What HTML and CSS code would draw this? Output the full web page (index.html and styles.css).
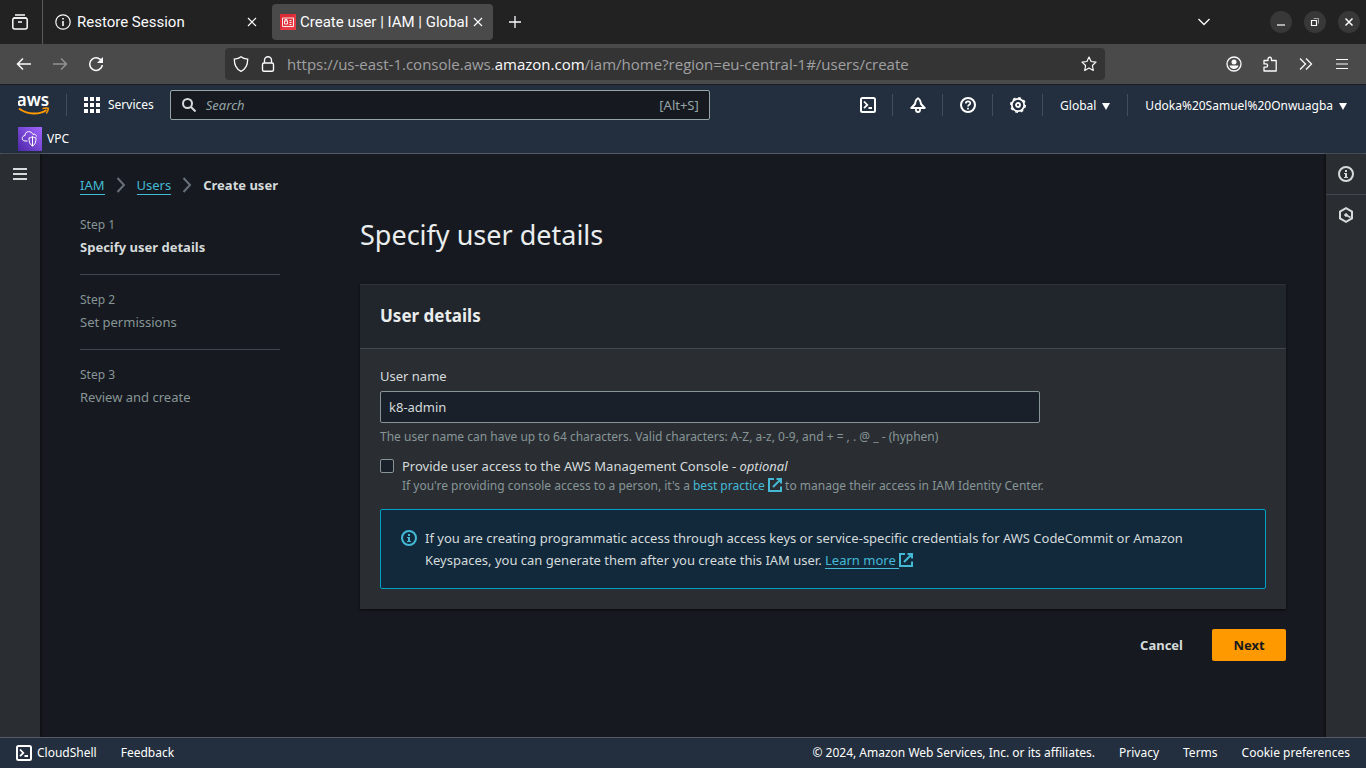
FILE: index.html
```html
<!DOCTYPE html>
<html lang="en">
<head>
<meta charset="utf-8">
<meta name="viewport" content="width=device-width, initial-scale=1">
<title>Create user | IAM | Global</title>
<link rel="stylesheet" href="styles.css">
</head>
<body>
<svg class="defs" aria-hidden="true">
  <symbol id="i-shell" viewBox="0 0 16 16"><rect x="1" y="1" width="14" height="14" rx="1.5" fill="none" stroke="currentColor" stroke-width="2"/><path d="M4 4.5 7.3 8 4 11.2M8.5 11h3.5" fill="none" stroke="currentColor" stroke-width="1.8"/></symbol>
  <symbol id="i-ext" viewBox="0 0 14 14"><path d="M6 1H1v12h12V8.500M8.500 1H13v4.500M13 1 5 9" fill="none" stroke="currentColor" stroke-width="2"/></symbol>
  <symbol id="i-info" viewBox="0 0 16 16"><circle cx="8" cy="8" r="7" fill="none" stroke="currentColor" stroke-width="2"/><path d="M7 4h2v2H7zM6 7h3v4h1v1H6v-1h1V8H6z" fill="currentColor"/></symbol>
  <symbol id="i-close" viewBox="0 0 10 10"><path d="m1 1 8 8M9 1 1 9" fill="none" stroke="currentColor" stroke-width="1.200"/></symbol>
  <symbol id="i-sep" viewBox="0 0 10 16"><path d="m1.500 1 6.500 7-6.500 7" fill="none" stroke="currentColor" stroke-width="2"/></symbol>
</svg>

<header class="browser">
  <div class="tabs">
    <button class="tab-archive" aria-label="Recent browsing">
      <svg width="18" height="18" viewBox="0 0 18 18" fill="none" stroke="currentColor" stroke-width="1.500"><path d="M4 2h10M2.500 5h13"/><rect x="1.800" y="5" width="14.400" height="11" rx="2"/><path d="M7 9h4"/></svg>
    </button>
    <div class="tab">
      <svg width="16" height="16" viewBox="0 0 16 16" fill="none" stroke="currentColor" stroke-width="1.200"><circle cx="8" cy="8" r="7.200"/><path d="M8 7v5M8 4v1.500" stroke-width="1.600"/></svg>
      <span class="tab-title">Restore Session</span>
      <button class="icon-btn" aria-label="Close tab"><svg width="10" height="10"><use href="#i-close"/></svg></button>
    </div>
    <div class="tab tab-active">
      <svg width="16" height="16" viewBox="0 0 16 16"><path d="M0 0h16v16H0z" fill="#dd2c36"/><path d="M0 16 16 0v16z" fill="#f04a52" opacity=".5"/><path d="M2.500 4h11v8.500h-11zM4.500 7h3v3h-3zM5 7V5.500h2V7M9.500 6.500h2M9.500 8.500h2M9.500 10.500h2" fill="none" stroke="#fff" stroke-width=".9"/></svg>
      <span class="tab-title">Create user | IAM | Global</span>
      <button class="icon-btn" aria-label="Close tab"><svg width="10" height="10"><use href="#i-close"/></svg></button>
    </div>
    <button class="icon-btn new-tab" aria-label="New tab"><svg width="12" height="12" viewBox="0 0 12 12"><path d="M6 0v12M0 6h12" stroke="currentColor" stroke-width="1.300"/></svg></button>
    <button class="icon-btn tab-list" aria-label="List all tabs"><svg width="12" height="8" viewBox="0 0 12 8"><path d="m.5 1 5.500 5.500L11.500 1" fill="none" stroke="currentColor" stroke-width="1.300"/></svg></button>
    <div class="window-controls">
      <button aria-label="Minimize"><svg width="10" height="10" viewBox="0 0 10 10"><path d="M1 8h8" stroke="currentColor" stroke-width="1.200"/></svg></button>
      <button aria-label="Restore"><svg width="10" height="10" viewBox="0 0 10 10" fill="none" stroke="currentColor"><path d="M1.500 3.500h5v5h-5z" stroke-width="1.200"/><path d="M3.500 1.500h5v5" opacity=".55"/></svg></button>
      <button aria-label="Close"><svg width="10" height="10" viewBox="0 0 10 10"><path d="m1.500 1.500 7 7M8.500 1.500l-7 7" stroke="currentColor" stroke-width="1.500"/></svg></button>
    </div>
  </div>
  <div class="toolbar">
    <div class="history">
      <button class="icon-btn" aria-label="Back"><svg width="16" height="14" viewBox="0 0 16 14" fill="none" stroke="currentColor" stroke-width="1.500"><path d="M15 7H2M7 1.500 1.500 7 7 12.500"/></svg></button>
      <button class="icon-btn" aria-label="Forward" disabled><svg width="16" height="14" viewBox="0 0 16 14" fill="none" stroke="currentColor" stroke-width="1.500"><path d="M1 7h13M9 1.500 14.500 7 9 12.500"/></svg></button>
      <button class="icon-btn" aria-label="Reload"><svg width="16" height="16" viewBox="0 0 16 16"><path d="M14 6A6.300 6.300 0 1 0 14.300 9" fill="none" stroke="currentColor" stroke-width="1.500"/><path d="M15 1v6H9z" fill="currentColor"/></svg></button>
    </div>
    <div class="address">
      <svg width="16" height="16" viewBox="0 0 16 16" fill="none" stroke="currentColor" stroke-width="1.300"><path d="M8 .8C6 2.500 3.500 3 1.300 3.200 1.300 9 3 13 8 15.300 13 13 14.700 9 14.700 3.200 12.500 3 10 2.500 8 .8z"/></svg>
      <svg width="16" height="16" viewBox="0 0 16 16" fill="none" stroke="currentColor" stroke-width="1.400"><rect x="2.500" y="7" width="11" height="8.300" rx="1.500"/><path d="M4.500 7V4a3.500 3.300 0 0 1 7 0v3"/></svg>
      <a class="url" href="#url">https://us-east-1.console.aws.<span>amazon.com</span>/iam/home?region=eu-central-1#/users/create</a>
      <button class="icon-btn" aria-label="Bookmark this page"><svg width="16" height="16" viewBox="0 0 16 16" fill="none" stroke="currentColor" stroke-width="1.200"><path d="m8 1 2.100 4.500 4.900.6-3.600 3.400.9 5-4.300-2.400-4.300 2.400.9-5L1 6.100l4.900-.6z" stroke-linejoin="round"/></svg></button>
    </div>
    <div class="tools">
      <button class="icon-btn" aria-label="Account"><svg width="16" height="16" viewBox="0 0 16 16"><circle cx="8" cy="8" r="7" fill="none" stroke="currentColor" stroke-width="1.300"/><circle cx="8" cy="6" r="2.500" fill="currentColor"/><path d="M3.500 9.500h9c-.5 2.200-2.200 3.500-4.500 3.500s-4-1.300-4.500-3.500z" fill="currentColor"/></svg></button>
      <button class="icon-btn" aria-label="Extensions"><svg width="16" height="16" viewBox="0 0 16 16" fill="none" stroke="currentColor" stroke-width="1.300" stroke-linejoin="round"><path d="M2 4.500h4V3a1.700 1.700 0 0 1 3.500 0v1.500h4.700V15H2v-3.800h2a1.600 1.600 0 0 0 0-3.300H2z"/></svg></button>
      <button class="icon-btn" aria-label="More tools"><svg width="14" height="14" viewBox="0 0 14 14" fill="none" stroke="currentColor" stroke-width="1.300"><path d="m1 1.500 5.500 5.500L1 12.500M7 1.500 12.500 7 7 12.500"/></svg></button>
      <button class="icon-btn" aria-label="Menu"><svg width="12" height="12" viewBox="0 0 12 12"><path d="M0 1.500h12M0 6h12M0 10.500h12" stroke="currentColor" stroke-width="1.200"/></svg></button>
    </div>
  </div>
</header>

<nav class="aws-nav">
  <div class="nav-row">
    <a class="logo" href="#home" aria-label="AWS home">
      <svg width="32" height="32" viewBox="0 0 32 32"><text class="logo-text" x="15" y="17" text-anchor="middle">aws</text><path d="M1 19.500c8.500 6.500 20.500 6.500 27.500 1.500" fill="none" stroke="#f90" stroke-width="2"/><path d="M24.500 19.600c2.500-.8 4.500-.8 5.700-.3.200 1.700-.6 3.700-2 5.200" fill="none" stroke="#f90" stroke-width="1.500"/></svg>
    </a>
    <button class="services"><svg width="16" height="16" viewBox="0 0 16 16" fill="currentColor"><path d="M0 0h4v4H0zM6 0h4v4H6zM12 0h4v4h-4zM0 6h4v4H0zM6 6h4v4H6zM12 6h4v4h-4zM0 12h4v4H0zM6 12h4v4H6zM12 12h4v4h-4z"/></svg>Services</button>
    <label class="search">
      <svg width="14" height="14" viewBox="0 0 14 14" fill="none" stroke="currentColor" stroke-width="2"><circle cx="5.500" cy="5.500" r="4.500"/><path d="m9 9 4.500 4.500"/></svg>
      <input type="search" placeholder="Search" aria-label="Search">
      <span>[Alt+S]</span>
    </label>
    <div class="nav-tools">
      <button class="nav-icon" aria-label="CloudShell"><svg width="16" height="16"><use href="#i-shell"/></svg></button>
      <button class="nav-icon" aria-label="Notifications"><svg width="16" height="16" viewBox="0 0 16 16" fill="none" stroke="currentColor" stroke-width="2" stroke-linejoin="round"><path d="M8 1.300C6 2.200 5.400 4 5 7L1.300 11h13.400L11 7c-.4-3-1-4.800-3-5.700z"/><path d="M6 12v1a2 2 0 0 0 4 0v-1" stroke-width="1.800"/></svg></button>
      <button class="nav-icon" aria-label="Help"><svg width="16" height="16" viewBox="0 0 16 16" fill="none" stroke="currentColor" stroke-width="2"><circle cx="8" cy="8" r="7"/><path d="M5.800 6.500c0-3 4.500-2.800 4.500-.3C10.300 7.800 8 7.700 8 9.500M8 10.700v1.800" stroke-width="1.700"/></svg></button>
      <button class="nav-icon" aria-label="Settings"><svg width="16" height="16" viewBox="0 0 16 16" fill="none" stroke="currentColor"><circle cx="8" cy="8" r="6.200" stroke-width="1.800"/><circle cx="8" cy="8" r="7.200" stroke-width="1.600" stroke-dasharray="2.827 2.827"/><circle cx="8" cy="8" r="2" stroke-width="1.800"/></svg></button>
      <button class="nav-menu">Global<i class="caret"></i></button>
      <button class="nav-menu">Udoka%20Samuel%20Onwuagba<i class="caret"></i></button>
    </div>
  </div>
  <div class="favorites">
    <a href="#vpc"><svg width="24" height="24" viewBox="0 0 24 24"><defs><linearGradient id="vpc" x1="0" y1="1" x2="1" y2="0"><stop stop-color="#4d27a8"/><stop offset="1" stop-color="#a166ff"/></linearGradient></defs><path d="M0 0h24v24H0z" fill="url(#vpc)"/><g fill="none" stroke="#fff"><path d="M9.500 14H7c-4-.5-3.500-5 0-5.500C7 3.500 13.500 3.500 15 7.500c2-1 3 .3 3.500 2"/><path d="M14.500 9.500c-1 1-2.500 1.300-3.500 1.300 0 4.200.7 6.700 3.500 8.200 2.800-1.500 3.500-4 3.500-8.200-1 0-2.500-.3-3.500-1.300zM14.500 9.500V19"/></g></svg>VPC</a>
  </div>
</nav>

<div class="workspace">
  <aside class="rail rail-left"><button class="rail-btn" aria-label="Open navigation"><svg width="14" height="12" viewBox="0 0 14 12"><path d="M0 1h14M0 6h14M0 11h14" stroke="currentColor" stroke-width="2"/></svg></button></aside>

  <main class="content">
    <ol class="breadcrumbs">
      <li><a href="#iam">IAM</a><svg width="10" height="16"><use href="#i-sep"/></svg></li>
      <li><a href="#users">Users</a><svg width="10" height="16"><use href="#i-sep"/></svg></li>
      <li aria-current="page">Create user</li>
    </ol>
    <div class="wizard">
      <ol class="steps">
        <li class="current"><small>Step 1</small><span>Specify user details</span></li>
        <li><small>Step 2</small><span>Set permissions</span></li>
        <li><small>Step 3</small><span>Review and create</span></li>
      </ol>
      <form class="form">
        <h1>Specify user details</h1>
        <section class="card">
          <h2>User details</h2>
          <div class="card-body">
            <label class="field-label" for="username">User name</label>
            <input class="text-input" id="username" type="text" value="k8-admin">
            <p class="hint">The user name can have up to 64 characters. Valid characters: A-Z, a-z, 0-9, and + = , . @ _ - (hyphen)</p>
            <div class="check">
              <input id="console" type="checkbox">
              <div>
                <label for="console">Provide user access to the AWS Management Console - <em>optional</em></label>
                <p class="hint">If you're providing console access to a person, it's a <a href="#best">best practice <svg width="14" height="14"><use href="#i-ext"/></svg></a> to manage their access in IAM Identity Center.</p>
              </div>
            </div>
            <div class="alert">
              <svg width="16" height="16"><use href="#i-info"/></svg>
              <p>If you are creating programmatic access through access keys or service-specific credentials for AWS CodeCommit or Amazon Keyspaces, you can generate them after you create this IAM user. <a class="learn" href="#learn">Learn more <svg width="14" height="14"><use href="#i-ext"/></svg></a></p>
            </div>
          </div>
        </section>
        <div class="actions">
          <button type="button" class="btn">Cancel</button>
          <button type="button" class="btn btn-primary">Next</button>
        </div>
      </form>
    </div>
  </main>

  <aside class="rail rail-right">
    <button class="rail-btn" aria-label="Info"><svg width="16" height="16"><use href="#i-info"/></svg></button>
    <button class="rail-btn" aria-label="Tutorials"><svg width="16" height="16" viewBox="0 0 16 16" fill="none" stroke="currentColor" stroke-width="2"><path d="m8 1.200 6 3.300v7l-6 3.300-6-3.300v-7z"/><circle cx="8" cy="8" r="1.300" fill="currentColor" stroke-width="1"/><path d="m8.500 8.300 4 2.200" stroke-width="1.600"/></svg></button>
  </aside>
</div>

<footer class="footer">
  <button class="footer-shell"><svg width="16" height="16"><use href="#i-shell"/></svg>CloudShell</button>
  <a href="#feedback">Feedback</a>
  <span class="copyright">© 2024, Amazon Web Services, Inc. or its affiliates.</span>
  <a href="#privacy">Privacy</a>
  <a href="#terms">Terms</a>
  <a href="#cookies">Cookie preferences</a>
</footer>
</body>
</html>
```
FILE: styles.css
```css
* { box-sizing: border-box; }
html, body { height: 100%; margin: 0; }
body {
  display: flex;
  flex-direction: column;
  background: #16191f;
  color: #d5dbdb;
  font: 13px/22px "Noto Sans", sans-serif;
}
button, input { font: inherit; color: inherit; margin: 0; }
button { border: 0; background: none; padding: 0; cursor: pointer; }
ol { list-style: none; margin: 0; padding: 0; }
p, h1, h2 { margin: 0; }
a { color: inherit; text-decoration: none; }
svg { flex: none; display: block; }
.defs { position: absolute; width: 0; height: 0; }

/* Browser window */
.browser { color: #fbfbfe; font-size: 15px; background: #4a4a4a; border-bottom: 1px solid #1c1b22; }
.tabs { display: flex; align-items: center; height: 44px; background: #222; }
.icon-btn { display: flex; align-items: center; justify-content: center; flex: none; }
.tab-archive { display: flex; align-items: center; justify-content: center; width: 43px; height: 44px; padding-right: 2px; border-right: 1px solid #5a5a5a; }
.tab { display: flex; align-items: center; width: 221px; height: 36px; padding: 0 8px 0 11px; gap: 6px; border-radius: 4px; margin-left: 1px; }
.tab-active { background: #4a4a4a; padding: 0 10px 0 8px; margin-left: 7px; gap: 4px; }
.tab-title { flex: 1; font-family: Roboto, sans-serif; white-space: nowrap; }
.new-tab { margin-left: 16px; }
.tab-list { margin-left: auto; }
.window-controls { display: flex; gap: 12px; margin: 0 6px 0 60px; }
.window-controls button { display: flex; align-items: center; justify-content: center; width: 22px; height: 22px; border-radius: 50%; background: #383838; }
.toolbar { display: flex; align-items: center; height: 40px; padding: 0 16px; }
.history { display: flex; gap: 20px; width: 209px; flex: none; }
.history :disabled { opacity: .4; }
.address { display: flex; align-items: center; flex: 0 1 880px; height: 32px; padding: 0 8px; gap: 11px; border-radius: 4px; background: #343434; }
.url { flex: 1; color: #a0a0a2; font-family: "Open Sans", sans-serif; line-height: 20px; white-space: nowrap; overflow: hidden; }
.url span { color: #fbfbfe; }
.tools { display: flex; align-items: center; gap: 20px; margin-left: auto; }
.tools .icon-btn { width: 16px; }

/* Console header */
.aws-nav { background: #232f3e; color: #fff; border-bottom: 1px solid #545b64; font-size: 12px; }
.nav-row { display: flex; align-items: center; height: 40px; padding-left: 18px; }
.logo { padding-right: 17px; position: relative; }
.logo::after { content: ""; position: absolute; right: 0; top: 5px; bottom: 5px; border-right: 1px solid #414d5c; }
.logo-text { font: 600 17px "Noto Sans", sans-serif; fill: #fff; }
.services { display: flex; align-items: center; gap: 8px; padding: 0 16px 0 17px; }
.search { display: flex; align-items: center; flex: 0 1 540px; height: 30px; padding: 0 10px 0 11px; gap: 10px; border: 1px solid #95a5a6; border-radius: 2px; background: #16191f; color: #95a5a6; font-size: 13px; }
.search svg { color: #d5dbdb; }
.search input { flex: 1; min-width: 0; border: 0; padding: 0; background: none; outline: 0; }
.search input::placeholder { color: #95a5a6; font-style: italic; opacity: 1; }
.nav-tools { display: flex; align-items: center; margin-left: auto; padding-right: 2px; }
.nav-icon { display: flex; align-items: center; justify-content: center; width: 50px; height: 22px; border-right: 1px solid #414d5c; }
.nav-menu { display: flex; align-items: center; gap: 6px; height: 22px; padding: 2px 17px 0; }
.nav-menu:last-child { border-left: 1px solid #414d5c; }
.caret { border: 4px solid transparent; border-top: 7px solid currentColor; border-bottom: 0; }
.favorites { display: flex; height: 28px; padding: 2px 18px; }
.favorites a { display: flex; align-items: center; gap: 5px; }

/* Page */
.workspace { display: flex; flex: 1; }
.rail { flex: none; width: 40px; background: #2a2e33; }
.rail-left { box-shadow: 1px 0 2px #0008; }
.rail-right { box-shadow: -1px 0 2px #0008; }
.rail-btn { display: flex; align-items: center; justify-content: center; width: 40px; height: 40px; }
.rail-right .rail-btn + .rail-btn { border-top: 1px solid #414750; }
.content { flex: 1; min-width: 0; padding: 20px 40px; }
.breadcrumbs { display: flex; }
.breadcrumbs li { display: flex; align-items: center; }
.breadcrumbs svg { margin: 0 11px; color: #687078; }
.breadcrumbs a { color: #44b9d6; line-height: 18px; border-bottom: 1px solid; }
.breadcrumbs li:last-child { font-weight: 700; }
.wizard { display: grid; grid-template-columns: 200px minmax(0, 1fr); gap: 80px; margin-top: 18px; }
.steps li { padding-bottom: 16px; color: #879596; }
.steps li + li { border-top: 1px solid #414750; padding-top: 14px; }
.steps small, .steps span { display: block; }
.steps small { font-size: 12px; }
.steps .current span { color: #d5dbdb; font-weight: 700; }
h1 { color: #eaeded; font-size: 27px; line-height: 42px; font-weight: 400; }
.card { margin-top: 28px; border-top: 1px solid #2f3339; background: #2a2e33; box-shadow: 0 1px 2px #000a; }
h2 { padding: 19px 20px 21px; background: #21252c; color: #eaeded; font-size: 17px; line-height: 23px; border-bottom: 1px solid #414750; }
.card-body { padding: 16px 20px 20px; }
.field-label { display: block; }
.text-input { display: block; width: 660px; max-width: 100%; height: 32px; margin-top: 4px; padding: 0 8px; border: 1px solid #879596; border-radius: 2px; background: #1a2029; }
.hint { color: #879596; font-size: 12px; line-height: 17px; }
.text-input + .hint { margin-top: 5px; }
.hint a { color: #44b9d6; }
.hint svg, .alert a svg { display: inline-block; vertical-align: -2px; }
.check { display: flex; gap: 8px; margin-top: 10px; }
.check input { appearance: none; flex: none; width: 14px; height: 14px; margin-top: 4px; border: 1px solid #879596; border-radius: 2px; background: #1a2029; }
.check label { display: block; }
.alert { display: flex; gap: 8px; margin-top: 15px; padding: 17px 20px; border: 1px solid #00a1c9; border-radius: 2px; background: #12293b; }
.alert > svg { color: #44b9d6; margin-top: 3px; }
.learn { color: #44b9d6; text-decoration: underline; text-underline-offset: 3px; }
.actions { display: flex; justify-content: flex-end; gap: 8px; margin-top: 20px; }
.btn { height: 32px; padding: 0 21px; border-radius: 2px; font-weight: 700; }
.btn-primary { min-width: 74px; background: #f90; color: #16191f; }

/* Footer */
.footer { display: flex; align-items: center; gap: 24px; height: 31px; padding: 0 16px; border-top: 1px solid #545b64; background: #232f3e; color: #fff; font-size: 12px; }
.footer-shell { display: flex; align-items: center; gap: 5px; }
.copyright { margin-left: auto; }
```
